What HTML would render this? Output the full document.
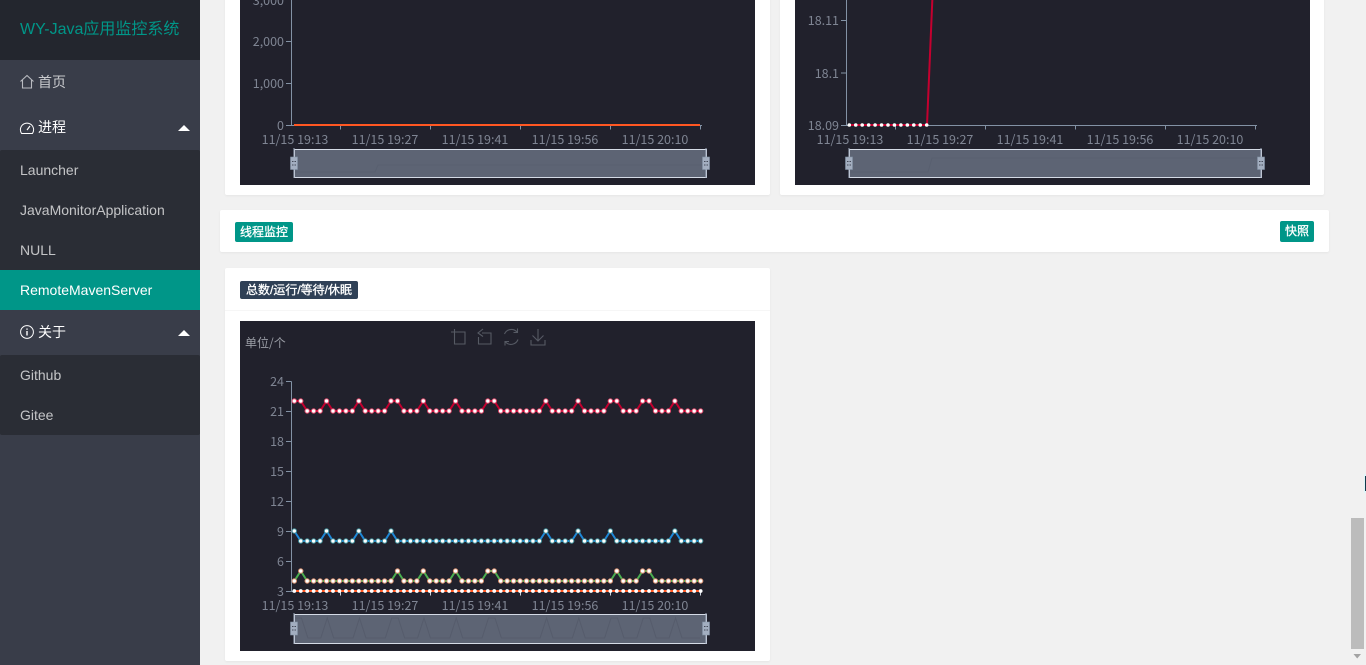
<!DOCTYPE html>
<html><head><meta charset="utf-8"><title>WY-Java应用监控系统</title>
<style>
html,body{margin:0;padding:0;width:1366px;height:665px;overflow:hidden;background:#f1f1f1}
body{position:relative;font-family:"Liberation Sans","Noto Sans CJK SC",sans-serif;font-size:14px}
div,span{box-sizing:border-box}
.a{position:absolute}
.side{left:0;top:0;width:200px;height:665px;background:#393d49}
.logo{left:0;top:0;width:200px;height:60px;background:#23262e;color:#009688;font-size:16px;line-height:59px;padding-left:20px;white-space:nowrap}
.it{left:0;width:200px;height:40px;line-height:40px;padding-left:20px;color:rgba(255,255,255,.72)}
.par{left:38px;height:45px;line-height:44px;color:rgba(255,255,255,.72)}
.w{color:#fff}
.sub{left:0;width:200px;background:#2a2d35;border-radius:2px}
.card{background:#fff;border-radius:2px;box-shadow:0 1px 2px rgba(0,0,0,.05)}
.tag{color:#fff;font-size:12px;font-weight:400;-webkit-text-stroke:.3px #fff;border-radius:2px;text-align:center;white-space:nowrap}
.chart{background:#21212c}
svg text{font-family:"Noto Sans CJK SC","Liberation Sans",sans-serif;font-size:12.5px;fill:#7f8593}
</style></head><body>
<div class="a side"></div>
<div class="a logo">WY-Java应用监控系统</div>
<div class="a par" style="top:60px">首页</div>
<div class="a par w" style="top:105px">进程</div>
<div class="a sub" style="top:150px;height:160px"></div>
<div class="a it" style="top:150px">Launcher</div>
<div class="a it" style="top:190px">JavaMonitorApplication</div>
<div class="a it" style="top:230px">NULL</div>
<div class="a it w" style="top:270px;background:#009688;color:#fff">RemoteMavenServer</div>
<div class="a par w" style="top:310px">关于</div>
<div class="a sub" style="top:355px;height:80px"></div>
<div class="a it" style="top:355px">Github</div>
<div class="a it" style="top:395px">Gitee</div>

<div class="a card" style="left:225px;top:-10px;width:545px;height:205px"></div>
<div class="a card" style="left:780px;top:-10px;width:544px;height:205px"></div>
<div class="a chart" style="left:240px;top:0;width:515px;height:185px"></div>
<div class="a chart" style="left:795px;top:0;width:515px;height:185px"></div>
<div class="a card" style="left:220px;top:210px;width:1109px;height:42px"></div>
<div class="a tag" style="left:235px;top:222px;width:58px;height:20px;line-height:20px;background:#009688">线程监控</div>
<div class="a tag" style="left:1280px;top:221px;width:34px;height:21px;line-height:21px;background:#009688">快照</div>
<div class="a card" style="left:225px;top:268px;width:545px;height:393px"></div>
<div class="a" style="left:225px;top:310px;width:545px;height:1px;background:#f6f6f6"></div>
<div class="a tag" style="left:240px;top:281px;width:118px;height:18px;line-height:18px;background:#2f4056">总数/运行/等待/休眠</div>
<div class="a chart" style="left:240px;top:321px;width:515px;height:330px"></div>

<svg class="a" style="left:0;top:0" width="1366" height="665" viewBox="0 0 1366 665">
<defs>
<marker id="mr" markerUnits="userSpaceOnUse" markerWidth="8" markerHeight="8" refX="4" refY="4"><circle cx="4" cy="4" r="2.2" fill="#fff" stroke="#e0476a" stroke-width="1"/></marker>
<marker id="mb" markerUnits="userSpaceOnUse" markerWidth="8" markerHeight="8" refX="4" refY="4"><circle cx="4" cy="4" r="2.2" fill="#fff" stroke="#3f8f9a" stroke-width="1"/></marker>
<marker id="mg" markerUnits="userSpaceOnUse" markerWidth="8" markerHeight="8" refX="4" refY="4"><circle cx="4" cy="4" r="2.2" fill="#fff" stroke="#d9906f" stroke-width="1"/></marker>
</defs>

<!-- sidebar icons -->
<g fill="none" stroke="#b9bbc1" stroke-width="1.1">
<path d="M20.5 81.5L27 75.5L33.5 81.5M22.5 80V88H31.5V80"/>
</g>
<g fill="none" stroke="#fff" stroke-width="1">
<path d="M21.6 133.5A6.6 6.600 0 1 1 32.400 133.500Z"/><path d="M27 130L30 126" stroke-width="1.200"/>
<circle cx="27" cy="332" r="6.400"/><path d="M27 331V335.500M27 328.500V329.800" stroke-width="1.400"/>
</g>
<path d="M178 131L184 125L190 131Z" fill="#fff"/>
<path d="M178 336L184 330L190 336Z" fill="#fff"/>

<!-- chart 1 -->
<g fill="none" stroke="#8392a5" stroke-width="1">
<path d="M291.500 -2V125.500H702M286 125.500H291.500M286 83.500H291.500M286 41.500H291.500M286 -.5H291.500"/>
<path d="M340.500 125V129.500M430.500 125V129.500M520.500 125V129.500M610.500 125V129.500M700.500 125V129.500"/>
<path d="M846.500 -2V125.500H1257M841 125.500H846.500M841 73H846.500M841 20.500H846.500"/>
<path d="M895.500 125V129.500M985.500 125V129.500M1075.500 125V129.500M1165.500 125V129.500M1255.500 125V129.500"/>
</g>
<path d="M294 125H700" stroke="#ff5722" stroke-width="2" fill="none"/>
<g text-anchor="end">
<text x="284" y="5">3,000</text><text x="284" y="46">2,000</text><text x="284" y="88">1,000</text><text x="284" y="130">0</text>
<text x="839" y="25">18.11</text><text x="839" y="78">18.1</text><text x="839" y="130">18.09</text>
</g>
<g text-anchor="middle">
<text x="295" y="144">11/15 19:13</text><text x="385" y="144">11/15 19:27</text><text x="475" y="144">11/15 19:41</text><text x="565" y="144">11/15 19:56</text><text x="655" y="144">11/15 20:10</text>
<text x="850" y="144">11/15 19:13</text><text x="940" y="144">11/15 19:27</text><text x="1030" y="144">11/15 19:41</text><text x="1120" y="144">11/15 19:56</text><text x="1210" y="144">11/15 20:10</text>
</g>
<path d="M849.500 125H927L932.400 -2" fill="none" stroke="#c4002f" stroke-width="2"/>
<path d="M849.300 125H927" fill="none" stroke="#fff" stroke-width="3.600" stroke-linecap="round" stroke-dasharray="0 6.45"/>

<!-- sliders -->
<g>
<rect x="294.500" y="149.500" width="412" height="28" fill="#5d6474" stroke="#d5dbe6"/>
<path d="M295 172H375L378 165H706" fill="none" stroke="#596070"/>
<rect x="290.500" y="157" width="7" height="12.500" fill="#a3aec0" stroke="#8392a5" stroke-width=".6"/>
<path d="M292 161.500H296M292 165H296" stroke="#444a58" stroke-width="1"/>
<path d="M294 148V178" stroke="#a3aec0"/>
<rect x="702.500" y="157" width="7" height="12.500" fill="#a3aec0" stroke="#8392a5" stroke-width=".6"/>
<path d="M704 161.500H708M704 165H708" stroke="#444a58" stroke-width="1"/>
<path d="M706 148V178" stroke="#a3aec0"/>
</g>
<g>
<rect x="849.500" y="149.500" width="412" height="28" fill="#5d6474" stroke="#d5dbe6"/>
<path d="M850 172H928L932 158H1261" fill="none" stroke="#596070"/>
<rect x="845.500" y="157" width="7" height="12.500" fill="#a3aec0" stroke="#8392a5" stroke-width=".6"/>
<path d="M847 161.500H851M847 165H851" stroke="#444a58" stroke-width="1"/>
<path d="M849 148V178" stroke="#a3aec0"/>
<rect x="1257.500" y="157" width="7" height="12.500" fill="#a3aec0" stroke="#8392a5" stroke-width=".6"/>
<path d="M1259 161.500H1263M1259 165H1263" stroke="#444a58" stroke-width="1"/>
<path d="M1261 148V178" stroke="#a3aec0"/>
</g>

<!-- chart 3 -->
<text x="245" y="347" style="font-size:12px;fill:#9a9da5">单位/个</text>
<g fill="none" stroke="#565a64" stroke-width="1.100">
<path d="M451 332H465V344H454.500V329"/>
<path d="M482 333H491V344H478.500V337M483 329L478 333L483 336.500"/>
<path d="M504.500 334A7.500 7.500 0 0 1 517 332M518 339.500A7.500 7.500 0 0 1 505.500 342M517.500 328.500V332.500H513.500M505 345.500V341.500H509"/>
<path d="M538 329V341M532.500 335.500L538 341L543.500 335.500M531 340V345H545V340"/>
</g>
<g fill="none" stroke="#8392a5" stroke-width="1">
<path d="M291.500 381.500V591.500H702"/>
<path d="M286 381.500H291.500M286 411.500H291.500M286 441.500H291.500M286 471.500H291.500M286 501.500H291.500M286 531.500H291.500M286 561.500H291.500M286 591.500H291.500"/>
<path d="M340.500 591V595.500M430.500 591V595.500M520.500 591V595.500M610.500 591V595.500M700.500 591V595.500" stroke="#cfd5df"/>
</g>
<g text-anchor="end">
<text x="284" y="386">24</text><text x="284" y="416">21</text><text x="284" y="446">18</text><text x="284" y="476">15</text><text x="284" y="506">12</text><text x="284" y="536">9</text><text x="284" y="566">6</text><text x="284" y="596">3</text>
</g>
<g text-anchor="middle">
<text x="295" y="610">11/15 19:13</text><text x="385" y="610">11/15 19:27</text><text x="475" y="610">11/15 19:41</text><text x="565" y="610">11/15 19:56</text><text x="655" y="610">11/15 20:10</text>
</g>

<!-- red: 21/22 -->
<path fill="none" stroke="#c4002f" stroke-width="2" marker-start="url(#mr)" marker-mid="url(#mr)" marker-end="url(#mr)" d="M294.300 401h6.450l6.450 10h6.450h6.450l6.450-10l6.450 10h6.450h6.450h6.450l6.450-10l6.450 10h6.450h6.450h6.450l6.450-10h6.450l6.450 10h6.450h6.450l6.450-10l6.450 10h6.450h6.450h6.450l6.450-10l6.450 10h6.450h6.450h6.450l6.450-10h6.450l6.450 10h6.450h6.450h6.450h6.450h6.450h6.450l6.450-10l6.450 10h6.450h6.450h6.450l6.450-10l6.450 10h6.450h6.450h6.450l6.450-10h6.450l6.450 10h6.450h6.450l6.450-10h6.450l6.450 10h6.450h6.450l6.450-10l6.450 10h6.450h6.450h6.450"/>
<!-- blue: 8/9 -->
<path fill="none" stroke="#1e88d8" stroke-width="2" marker-start="url(#mb)" marker-mid="url(#mb)" marker-end="url(#mb)" d="M294.300 531l6.450 10h6.450h6.450h6.450l6.450-10l6.450 10h6.450h6.450h6.450l6.450-10l6.450 10h6.450h6.450h6.450l6.450-10l6.450 10h6.450h6.450h6.450h6.450h6.450h6.450h6.450h6.450h6.450h6.450h6.450h6.450h6.450h6.450h6.450h6.450h6.450h6.450h6.450h6.450h6.450h6.450l6.450-10l6.450 10h6.450h6.450h6.450l6.450-10l6.450 10h6.450h6.450h6.450l6.450-10l6.450 10h6.450h6.450h6.450h6.450h6.450h6.450h6.450h6.450l6.450-10l6.450 10h6.450h6.450h6.450"/>
<!-- green: 4/5 -->
<path fill="none" stroke="#4caf50" stroke-width="2" marker-start="url(#mg)" marker-mid="url(#mg)" marker-end="url(#mg)" d="M294.300 581l6.450-10l6.450 10h6.450h6.450h6.450h6.450h6.450h6.450h6.450h6.450h6.450h6.450h6.450h6.450h6.450l6.450-10l6.450 10h6.450h6.450l6.450-10l6.450 10h6.450h6.450h6.450l6.450-10l6.450 10h6.450h6.450h6.450l6.450-10h6.450l6.450 10h6.450h6.450h6.450h6.450h6.450h6.450h6.450h6.450h6.450h6.450h6.450h6.450h6.450h6.450h6.450h6.450h6.450l6.450-10l6.450 10h6.450h6.450l6.450-10h6.450l6.450 10h6.450h6.450h6.450h6.450h6.450h6.450h6.450"/>
<!-- orange: 3 -->
<path d="M294.300 591H700.700" stroke="#ff5722" stroke-width="2" fill="none"/>
<path d="M294.300 591H700.800" stroke="#fff" stroke-width="3.800" stroke-linecap="round" stroke-dasharray="0 6.45" fill="none"/>

<!-- slider 3 -->
<rect x="294.500" y="614.500" width="412" height="29" fill="#5d6474"/>
<path fill="none" stroke="#565c6c" d="M295 618h6.450l6.450 20h6.450h6.450l6.450-20l6.450 20h6.450h6.450h6.450l6.450-20l6.450 20h6.450h6.450h6.450l6.450-20h6.450l6.450 20h6.450h6.450l6.450-20l6.450 20h6.450h6.450h6.450l6.450-20l6.450 20h6.450h6.450h6.450l6.450-20h6.450l6.450 20h6.450h6.450h6.450h6.450h6.450h6.450l6.450-20l6.450 20h6.450h6.450h6.450l6.450-20l6.450 20h6.450h6.450h6.450l6.450-20h6.450l6.450 20h6.450h6.450l6.450-20h6.450l6.450 20h6.450h6.450l6.450-20l6.450 20h6.450h6.450h5"/>
<rect x="294.500" y="614.500" width="412" height="29" fill="none" stroke="#d5dbe6"/>
<rect x="290.500" y="622" width="7" height="13" fill="#a3aec0" stroke="#8392a5" stroke-width=".6"/>
<path d="M292 626.500H296M292 630H296" stroke="#444a58" stroke-width="1"/>
<path d="M294 613V644" stroke="#a3aec0"/>
<rect x="702.500" y="622" width="7" height="13" fill="#a3aec0" stroke="#8392a5" stroke-width=".6"/>
<path d="M704 626.500H708M704 630H708" stroke="#444a58" stroke-width="1"/>
<path d="M706 613V644" stroke="#a3aec0"/>

<!-- scrollbar -->
<rect x="1351" y="518" width="13" height="131" fill="#bcbcbc"/>
<path d="M1353.500 654H1361L1357.200 658.500Z" fill="#a3a3a3"/>
<!-- cursor artefact -->
<rect x="1364" y="474" width="2" height="19" fill="#dff6fa"/>
<rect x="1365" y="476" width="1" height="15" fill="#123a4a"/>
</svg>
</body></html>
